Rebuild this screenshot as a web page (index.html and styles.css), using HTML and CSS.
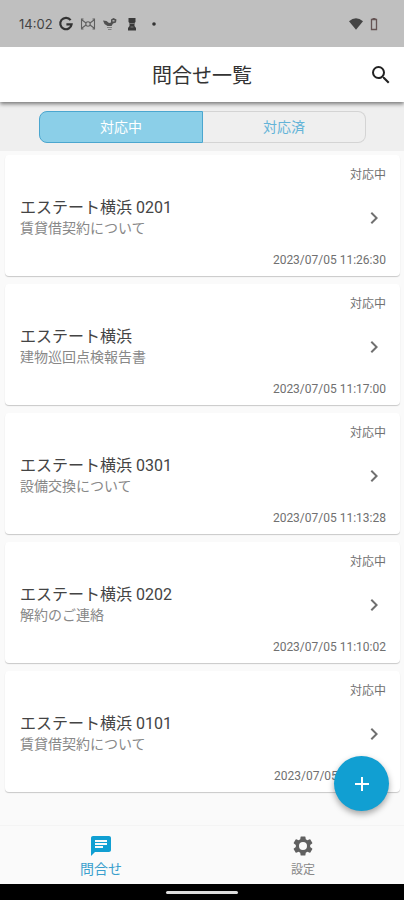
FILE: index.html
```html
<!DOCTYPE html>
<html lang="ja">
<head>
<meta charset="utf-8">
<meta name="viewport" content="width=device-width, initial-scale=1">
<title>問合せ一覧</title>
<link rel="stylesheet" href="styles.css">
</head>
<body>
<div class="screen">
  <div class="status-bar">
    <span class="clock">14:02</span>
    <svg class="status-icon" viewBox="0 0 16 16" aria-hidden="true"><path d="M12.6 4.2A5.700 5.700 0 1 0 13.600 8.300H8.400" fill="none" stroke="#333" stroke-width="2.200"/></svg>
    <svg class="status-icon" viewBox="0 0 16 16" aria-hidden="true"><g fill="none" stroke="#606060" stroke-width="1.100"><path d="M3.500 3H1.500v10h2M12.500 3h2v10h-2M2 4l4 3M14 4l-4 3M2 12l4-3M14 12l-4-3"/><circle cx="8" cy="8" r="2.200"/></g></svg>
    <svg class="status-icon" viewBox="0 0 16 16" aria-hidden="true"><path d="M1 4.500l3.500.5L7 7l2-.5V3.500L11.500 2l3 1.500-.5 3-3 1-1.500 2.500h-4L2.500 8z" fill="#505050"/><path d="M10.500 4.800h2" stroke="#bfbfbf" stroke-width="1.300"/><path d="M5 11.500h5M6 13.500h3.500" stroke="#808080"/></svg>
    <svg class="status-icon" viewBox="0 0 16 16" aria-hidden="true"><path d="M4.500 2h7v4l-1 1v3l1.500 2v2.500H4V12l1.500-2V7l-1-1z" fill="#3a3a3a"/><path d="M6 7.500h4M6.500 11h3" stroke="#777"/></svg>
    <svg class="status-icon dot" viewBox="0 0 16 16" aria-hidden="true"><circle cx="8" cy="8" r="1.800" fill="#333"/></svg>
    <svg class="status-icon wifi" viewBox="0 0 16 16" aria-hidden="true"><path d="M1 5.200Q8-.5 15 5.200L8 13.800z" fill="#444"/></svg>
    <svg class="status-icon battery" viewBox="0 0 8 16" aria-hidden="true"><path d="M1.500 3.500h5v10h-5z" fill="none" stroke="#655" stroke-width="1.300"/><path d="M2.500 2h3v1.500h-3z" fill="#655"/></svg>
  </div>
  <header class="app-bar">
    <h1>問合せ一覧</h1>
    <button class="search" type="button" aria-label="検索">
      <svg viewBox="0 0 24 24"><path d="M15.500 14h-.79l-.28-.27A6.471 6.471 0 0 0 16 9.500 6.500 6.500 0 1 0 9.500 16c1.610 0 3.090-.59 4.230-1.570l.27.28v.79l5 4.990L20.490 19l-4.990-5zm-6 0C7.010 14 5 11.990 5 9.500S7.010 5 9.500 5 14 7.010 14 9.500 11.990 14 9.500 14z"/></svg>
    </button>
  </header>
  <div class="filter">
    <button class="segment selected" type="button" aria-pressed="true">対応中</button>
    <button class="segment" type="button" aria-pressed="false">対応済</button>
  </div>
  <main class="list">
    <a class="card" href="#"><span class="state">対応中</span><span class="row"><span class="text"><span class="name">エステート横浜 0201</span><span class="subject">賃貸借契約について</span></span><svg class="chevron" viewBox="0 0 24 24"><path d="M10 6 8.590 7.410 13.170 12l-4.580 4.590L10 18l6-6z"/></svg></span><time>2023/07/05 11:26:30</time></a>
    <a class="card" href="#"><span class="state">対応中</span><span class="row"><span class="text"><span class="name">エステート横浜</span><span class="subject">建物巡回点検報告書</span></span><svg class="chevron" viewBox="0 0 24 24"><path d="M10 6 8.590 7.410 13.170 12l-4.580 4.590L10 18l6-6z"/></svg></span><time>2023/07/05 11:17:00</time></a>
    <a class="card" href="#"><span class="state">対応中</span><span class="row"><span class="text"><span class="name">エステート横浜 0301</span><span class="subject">設備交換について</span></span><svg class="chevron" viewBox="0 0 24 24"><path d="M10 6 8.590 7.410 13.170 12l-4.580 4.590L10 18l6-6z"/></svg></span><time>2023/07/05 11:13:28</time></a>
    <a class="card" href="#"><span class="state">対応中</span><span class="row"><span class="text"><span class="name">エステート横浜 0202</span><span class="subject">解約のご連絡</span></span><svg class="chevron" viewBox="0 0 24 24"><path d="M10 6 8.590 7.410 13.170 12l-4.580 4.590L10 18l6-6z"/></svg></span><time>2023/07/05 11:10:02</time></a>
    <a class="card" href="#"><span class="state">対応中</span><span class="row"><span class="text"><span class="name">エステート横浜 0101</span><span class="subject">賃貸借契約について</span></span><svg class="chevron" viewBox="0 0 24 24"><path d="M10 6 8.590 7.410 13.170 12l-4.580 4.590L10 18l6-6z"/></svg></span><time>2023/07/05</time></a>
    <button class="fab" type="button" aria-label="新規作成"><svg viewBox="0 0 24 24"><path d="M19 13h-6v6h-2v-6H5v-2h6V5h2v6h6z"/></svg></button>
  </main>
  <nav class="tabs">
    <a class="tab active" href="#" aria-current="page"><svg viewBox="0 0 24 24"><path d="M20 2H4c-1.100 0-1.990.9-1.990 2L2 22l4-4h14c1.100 0 2-.9 2-2V4c0-1.100-.9-2-2-2zM6 9h12v2H6V9zm8 5H6v-2h8v2zm4-6H6V6h12v2z"/></svg><span>問合せ</span></a>
    <a class="tab" href="#"><svg viewBox="0 0 24 24"><path fill-rule="evenodd" d="M19.140 12.940c.04-.3.060-.61.060-.94s-.02-.64-.07-.94l2.030-1.580a.49.49 0 0 0 .12-.61l-1.920-3.320a.49.49 0 0 0-.59-.22l-2.390.96a7 7 0 0 0-1.620-.94l-.36-2.540a.48.48 0 0 0-.48-.41h-3.840a.47.47 0 0 0-.47.41l-.36 2.540c-.59.24-1.130.57-1.620.94l-2.390-.96a.48.48 0 0 0-.59.22L2.740 8.870a.48.48 0 0 0 .12.61l2.030 1.580a6 6 0 0 0-.02 1.880l-2.030 1.580a.49.49 0 0 0-.12.61l1.920 3.320c.12.22.37.29.59.22l2.390-.96c.5.38 1.030.7 1.620.94l.36 2.540c.05.24.24.41.48.41h3.840c.24 0 .44-.17.47-.41l.36-2.540c.59-.24 1.130-.56 1.620-.94l2.390.96c.22.08.47 0 .59-.22l1.920-3.320a.47.47 0 0 0-.12-.61zM12 16a4 4 0 1 1 0-8 4 4 0 0 1 0 8z"/></svg><span>設定</span></a>
  </nav>
  <div class="home-bar"><span class="handle"></span></div>
</div>
</body>
</html>
```
FILE: styles.css
```css
* { box-sizing: border-box; }
body {
  margin: 0;
  background: #fafafa;
  font-family: Roboto, "Noto Sans CJK JP", sans-serif;
  color: #333;
}
button { padding: 0; border: 0; background: none; font: inherit; }
a { color: inherit; text-decoration: none; }
.screen { display: flex; flex-direction: column; min-height: 100vh; }
.status-bar {
  display: flex;
  align-items: center;
  gap: 6px;
  height: 47px;
  padding: 0 26px 0 19px;
  background: #bfbfbf;
}
.clock { margin-right: -1px; font: 13px/16px Inter, sans-serif; color: #444; }
.status-icon { width: 16px; height: 16px; }
.wifi { margin-left: auto; }
.battery { width: 8px; }
.app-bar {
  position: relative;
  display: grid;
  grid-template-columns: 46px 1fr 46px;
  align-items: center;
  height: 55px;
  background: #fff;
  box-shadow: 0 2px 4px rgba(0, 0, 0, .5);
  clip-path: inset(0 0 -8px 0);
}
.app-bar h1 {
  grid-column: 2;
  margin: 0;
  padding-top: 2px;
  font-size: 20px;
  font-weight: 400;
  line-height: 28px;
  text-align: center;
  color: #333;
}
.search { display: grid; place-items: center; height: 48px; }
.search svg { width: 24px; height: 24px; fill: #222; }
.filter {
  display: flex;
  padding: 9px 38px 8px 39px;
  background: #efefef;
}
.segment {
  flex: 1;
  height: 32px;
  border: 1px solid #d4d4d4;
  border-left: 0;
  border-radius: 0 8px 8px 0;
  font-size: 14px;
  line-height: 20px;
  color: #64b4d8;
}
.segment.selected {
  border: 1px solid #4ba6cf;
  border-radius: 8px 0 0 8px;
  background: #8bcfe8;
  color: #fff;
}
.list {
  position: relative;
  flex: 1;
  display: flex;
  flex-direction: column;
  gap: 8px;
  padding: 4px 4px 32px 5px;
}
.card {
  display: flex;
  flex-direction: column;
  justify-content: space-between;
  height: 121px;
  padding: 11px 14px 7px 15px;
  border-radius: 4px;
  background: #fff;
  box-shadow: 0 1px 1px rgba(0, 0, 0, .2);
}
.state, time {
  align-self: flex-end;
  font-size: 12px;
  line-height: 18px;
  color: #707070;
}
time { min-width: 112px; }
.row { display: flex; align-items: center; justify-content: space-between; }
.text { display: flex; flex-direction: column; }
.name { font-size: 16px; line-height: 20px; color: #444; }
.subject { font-size: 14px; line-height: 20px; color: #888; }
.chevron { width: 24px; height: 24px; fill: #707070; }
.fab {
  position: absolute;
  right: 15px;
  bottom: 14px;
  display: grid;
  place-items: center;
  width: 55px;
  height: 55px;
  border-radius: 50%;
  background: #119fd2;
  box-shadow: 0 3px 6px rgba(0, 0, 0, .35);
}
.fab svg { width: 24px; height: 24px; fill: #fff; }
.tabs {
  display: flex;
  height: 59px;
  border-top: 1px solid #f4f4f4;
  background: #fafafa;
}
.tab {
  flex: 1;
  display: flex;
  flex-direction: column;
  align-items: center;
  padding-top: 8px;
  font-size: 12px;
  line-height: 24px;
  color: #888;
}
.tab svg { width: 24px; height: 24px; fill: #606060; }
.tab.active { font-size: 14px; line-height: 22px; color: #3a9fcd; }
.tab.active svg { fill: #119fd2; }
.home-bar {
  display: grid;
  place-items: center;
  height: 16px;
  background: #000;
}
.handle { width: 72px; height: 3px; border-radius: 2px; background: #ddd; }
```
